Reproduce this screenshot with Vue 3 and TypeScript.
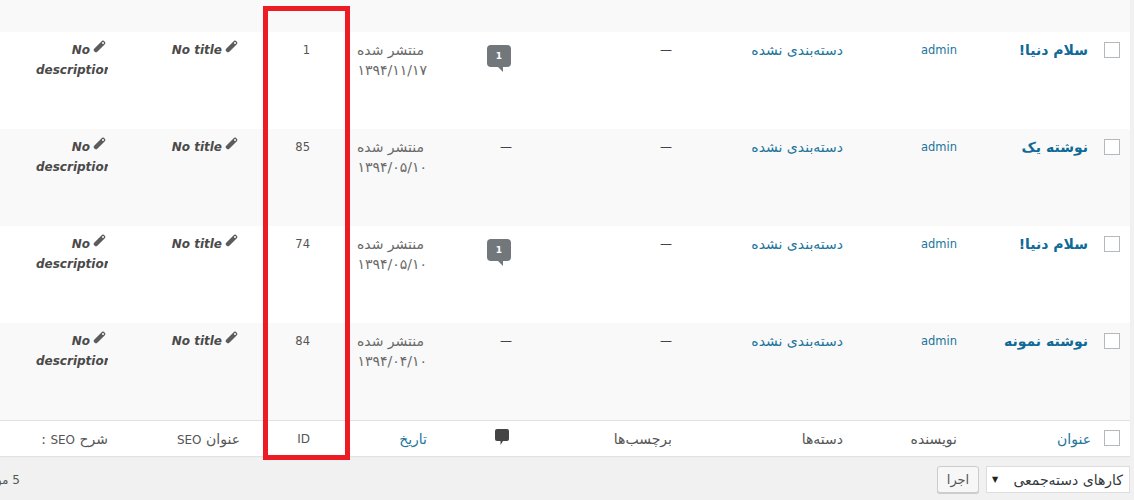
<script setup lang="ts">
interface Row { title: string; id: string; date: string; comments: number }
const rows: Row[] = [
  { title: 'سلام دنیا!', id: '1', date: '۱۳۹۴/۱۱/۱۷', comments: 1 },
  { title: 'نوشته یک', id: '85', date: '۱۳۹۴/۰۵/۱۰', comments: 0 },
  { title: 'سلام دنیا!', id: '74', date: '۱۳۹۴/۰۵/۱۰', comments: 1 },
  { title: 'نوشته نمونه', id: '84', date: '۱۳۹۴/۰۴/۱۰', comments: 0 },
]
</script>

<template>
  <div class="page" dir="rtl">
    <table class="list">
      <colgroup>
        <col class="c-check" /><col class="c-title" /><col class="c-author" /><col class="c-cat" />
        <col class="c-tags" /><col class="c-comments" /><col class="c-date" /><col class="c-id" />
        <col class="c-seot" /><col class="c-seod" />
      </colgroup>
      <tbody>
        <tr class="strip"><td colspan="10"></td></tr>
        <tr v-for="(r, i) in rows" :key="r.id" :class="{ alt: i % 2 === 1 }">
          <td class="check"><span class="box"></span></td>
          <td class="title"><a>{{ r.title }}</a></td>
          <td class="latin"><a>admin</a></td>
          <td><a>دسته‌بندی نشده</a></td>
          <td class="dash">—</td>
          <td class="comments">
            <span v-if="r.comments" class="bubble">{{ r.comments }}</span>
            <span v-else class="dash">—</span>
          </td>
          <td class="date"><div class="status">منتشر شده</div>{{ r.date }}</td>
          <td class="num">{{ r.id }}</td>
          <td class="seo">
            <div class="seo-line" dir="ltr">
              <em>No title</em>
              <svg class="pen" viewBox="0 0 13 13">
                <path class="pen-body" d="M3 10 10 3" />
                <circle class="pen-dot" cx="10" cy="3" r="1" />
              </svg>
            </div>
          </td>
          <td class="seo">
            <div class="seo-line" dir="ltr">
              <em>No</em>
              <svg class="pen" viewBox="0 0 13 13">
                <path class="pen-body" d="M3 10 10 3" />
                <circle class="pen-dot" cx="10" cy="3" r="1" />
              </svg>
            </div>
            <div class="clip" dir="ltr"><em>description</em></div>
          </td>
        </tr>
      </tbody>
      <tfoot>
        <tr>
          <td class="check"><span class="box"></span></td>
          <td class="foot-title"><a>عنوان</a></td>
          <td>نویسنده</td>
          <td>دسته‌ها</td>
          <td>برچسب‌ها</td>
          <td class="comments">
            <svg class="foot-bubble" viewBox="0 0 14 16">
              <path d="M2 0h10a2 2 0 0 1 2 2v8a2 2 0 0 1-2 2H8l-2.500 4V12H2a2 2 0 0 1-2-2V2a2 2 0 0 1 2-2z" />
            </svg>
          </td>
          <td><a>تاریخ</a></td>
          <td class="num">ID</td>
          <td>عنوان <span class="mix">SEO</span></td>
          <td>شرح <span class="mix">SEO</span> :</td>
        </tr>
      </tfoot>
    </table>

    <div class="nav">
      <div class="bulk">
        <span class="sel"><span>کارهای دسته‌جمعی</span><i class="arrow">▼</i></span>
        <button class="btn">اجرا</button>
      </div>
      <div class="count"><span>5 مورد</span></div>
    </div>

    <div class="mark"></div>
  </div>
</template>

<style>
html, body { margin: 0; background: #f1f1f1; }
</style>

<style scoped>
.page {
  position: relative;
  width: 1134px;
  height: 500px;
  overflow: hidden;
  box-sizing: border-box;
  padding-right: 4px;
  background: #f1f1f1;
  color: #555;
  font: 14px/20px "DejaVu Sans", Tahoma, sans-serif;
}
.list {
  width: 1130px;
  table-layout: fixed;
  border-collapse: collapse;
  background: #fff;
  box-shadow: 0 1px 1px rgba(0, 0, 0, .06);
}
.c-check { width: 35px; }
.c-title { width: 128px; }
.c-author { width: 114px; }
.c-cat { width: 171px; }
.c-tags { width: 160px; }
.c-comments { width: 85px; }
.c-date { width: 117px; }
.c-id { width: 70px; }
.c-seot { width: 132px; }
.c-seod { width: 118px; }
td {
  box-sizing: border-box;
  padding: 8px 10px 0;
  vertical-align: top;
  height: 97px;
  overflow: hidden;
  white-space: nowrap;
}
.strip td { height: 32px; padding: 0; background: #f9f9f9; }
.alt td { background: #f9f9f9; }
a { color: #21759b; }
.title { padding-right: 7px; font-weight: 700; }
.title a { color: #0f6a97; }
.latin { font-size: 11.500px; }
.check { padding: 10px 0 0; }
.box {
  display: block;
  width: 14px;
  height: 14px;
  margin-right: 10px;
  border: 1px solid #b4b9be;
  background: #fff;
}
.dash { display: block; color: #444; font-size: 12px; }
td.dash { display: table-cell; }
.bubble {
  display: block;
  position: relative;
  width: 24px;
  height: 22px;
  margin: 5px 1px 0 0;
  border-radius: 4px;
  background: #72777c;
  color: #fff;
  font-size: 9px;
  font-weight: 700;
  line-height: 22px;
  text-align: center;
}
.bubble::after {
  content: "";
  position: absolute;
  left: 11px;
  top: 22px;
  border-top: 5px solid #72777c;
  border-left: 5px solid transparent;
}
.date { color: #6a6a6a; }
.status { margin-right: 3px; }
.num { font-size: 11.500px; padding-right: 10px; }
.seo { font-weight: 700; font-size: 12px; color: #4a4a4a; }
.seo-line { display: flex; justify-content: flex-end; align-items: center; gap: 3px; height: 20px; margin-right: 2px; }
.pen { width: 13px; height: 13px; margin-top: -7px; }
.pen-body { stroke: #5c5c5c; stroke-width: 4.500; stroke-linecap: round; fill: none; }
.pen-dot { fill: #fff; }
.clip { width: 72px; margin-left: 26px; overflow: hidden; }
tfoot td {
  height: 36px;
  padding: 8px 10px 0;
  border-top: 1px solid #e1e1e1;
  background: #fff;
}
tfoot .check { padding: 9px 0 0; }
tfoot .foot-title { padding-right: 4px; }
tfoot .num { font-size: 12px; }
.mix { font-size: 12px; }
.foot-bubble { display: block; width: 14px; height: 16px; margin-right: 3px; fill: #444; }
.nav {
  display: flex;
  justify-content: space-between;
  align-items: flex-start;
  padding-top: 10px;
}
.bulk { display: flex; gap: 7px; }
.sel {
  display: flex;
  align-items: center;
  justify-content: space-between;
  box-sizing: border-box;
  width: 144px;
  height: 27px;
  padding: 0 6px 0 5px;
  border: 1px solid #ddd;
  background: #fff;
  color: #32373c;
}
.arrow { font-style: normal; font-size: 8px; color: #222; }
.btn {
  width: 42px;
  height: 27px;
  padding: 0;
  border: 1px solid #ccc;
  border-radius: 3px;
  background: #f7f7f7;
  box-shadow: 0 1px 0 #ccc;
  color: #555;
  font: 13px/20px "DejaVu Sans", sans-serif;
}
.count { width: 20px; margin-top: 4px; font-size: 12px; }
.count span { display: block; white-space: nowrap; }
.mark {
  position: absolute;
  left: 263px;
  top: 6px;
  width: 87px;
  height: 454px;
  box-sizing: border-box;
  border: 5px solid #ed1c24;
  pointer-events: none;
}
</style>
